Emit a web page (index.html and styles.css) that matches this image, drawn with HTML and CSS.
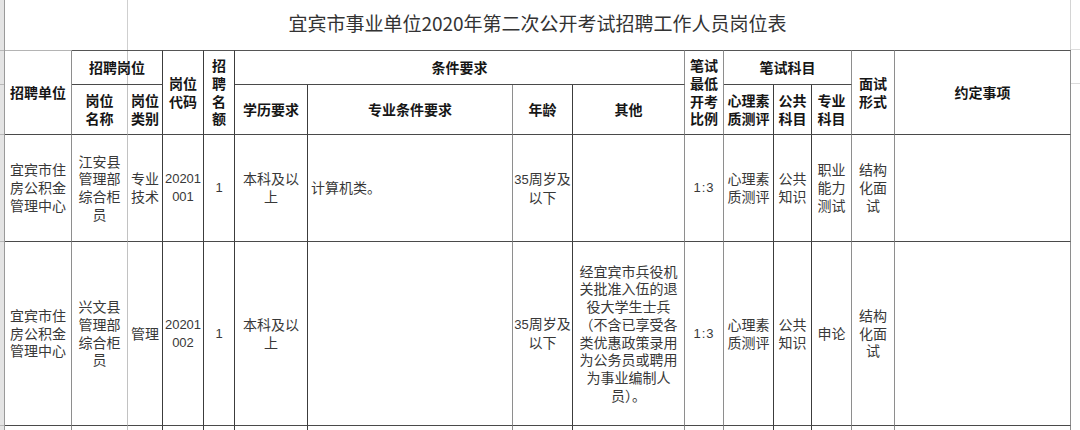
FILE: index.html
```html
<!DOCTYPE html>
<html lang="zh-CN">
<head>
<meta charset="utf-8">
<title>宜宾市事业单位2020年第二次公开考试招聘工作人员岗位表</title>
<link rel="stylesheet" href="styles.css">
</head>
<body>
<div class="sheet">
  <div class="strip">
    <div class="sr r0"></div>
    <div class="sr r1"></div>
    <div class="sr r2"></div>
    <div class="sr r3"></div>
    <div class="sr r4"></div>
  </div>
  <div class="grid">
    <div class="c title">宜宾市事业单位<span class="tnum">2020</span>年第二次公开考试招聘工作人员岗位表</div>

    <div class="c h top top-light rs2 bm">招聘单位</div>
    <div class="c h top cs2 bd gridline">招聘岗位</div>
    <div class="c h top rs2 bd p2">岗位代码</div>
    <div class="c h top rs2 bd p3">招聘名额</div>
    <div class="c h top cs4 bm">条件要求</div>
    <div class="c h top rs2 bm p3">笔试最低开考比例</div>
    <div class="c h top cs3 bm">笔试科目</div>
    <div class="c h top rs2 bm">面试形式</div>
    <div class="c h top rs2 bm">约定事项</div>

    <div class="c h bl p8">岗位名称</div>
    <div class="c h bd p2">岗位类别</div>
    <div class="c h bd p6">学历要求</div>
    <div class="c h bm">专业条件要求</div>
    <div class="c h bd p1">年龄</div>
    <div class="c h bm p5">其他</div>
    <div class="c h bd p3">心理素质测评</div>
    <div class="c h bd p3">公共科目</div>
    <div class="c h bm">专业科目</div>

    <div class="c bm">宜宾市住房公积金管理中心</div>
    <div class="c bl">江安县管理部综合柜员</div>
    <div class="c bd p2">专业技术</div>
    <div class="c bd p1 brk"><span class="num">20201001</span></div>
    <div class="c bd p3"><span class="num">1</span></div>
    <div class="c bd p6">本科及以上</div>
    <div class="c bm left">计算机类。</div>
    <div class="c bd p1"><span><span class="num">35</span>周岁及以下</span></div>
    <div class="c bm p5"></div>
    <div class="c bm p3"><span class="num ratio">1:3</span></div>
    <div class="c bd p3">心理素质测评</div>
    <div class="c bd p3">公共知识</div>
    <div class="c bm">职业能力测试</div>
    <div class="c bm">结构化面试</div>
    <div class="c bm"></div>

    <div class="c bm">宜宾市住房公积金管理中心</div>
    <div class="c bl">兴文县管理部综合柜员</div>
    <div class="c bd p2">管理</div>
    <div class="c bd p1 brk"><span class="num">20201002</span></div>
    <div class="c bd p3"><span class="num">1</span></div>
    <div class="c bd p6">本科及以上</div>
    <div class="c bm left"></div>
    <div class="c bd p1"><span><span class="num">35</span>周岁及以下</span></div>
    <div class="c bm p5">经宜宾市兵役机关批准入伍的退役大学生士兵（不含已享受各类优惠政策录用为公务员或聘用为事业编制人员）。</div>
    <div class="c bm p3"><span class="num ratio">1:3</span></div>
    <div class="c bd p3">心理素质测评</div>
    <div class="c bd p3">公共知识</div>
    <div class="c bm">申论</div>
    <div class="c bm">结构化面试</div>
    <div class="c bm"></div>

    <div class="c nb bm"></div>
    <div class="c nb bl"></div>
    <div class="c nb bd"></div>
    <div class="c nb bd"></div>
    <div class="c nb bd"></div>
    <div class="c nb bd"></div>
    <div class="c nb bm"></div>
    <div class="c nb bd"></div>
    <div class="c nb bm"></div>
    <div class="c nb bm"></div>
    <div class="c nb bd"></div>
    <div class="c nb bd"></div>
    <div class="c nb bm"></div>
    <div class="c nb bm"></div>
    <div class="c nb bm"></div>
  </div>
  <div class="filler"></div>
</div>
</body>
</html>
```

FILE: styles.css
```css
* {
  box-sizing: border-box;
}

html,
body {
  margin: 0;
  padding: 0;
  background: #ffffff;
}

body {
  width: 1080px;
  height: 430px;
  overflow: hidden;
  font-family: "Noto Sans CJK SC", "Noto Sans CJK JP", sans-serif;
  font-size: 14px;
  line-height: 17.7px;
  color: #383838;
}

.sheet {
  display: flex;
  height: 430px;
  overflow: hidden;
  align-items: flex-start;
}

.strip {
  width: 4px;
  height: 430px;
  flex: none;
  background: #e4e4e4;
  display: flex;
  flex-direction: column;
}

.sr {
  border-bottom: 1px solid #b8b8b8;
}

.r0 { height: 51px; }
.r1 { height: 34px; }
.r2 { height: 50px; }
.r3 { height: 107px; }
.r4 { height: 184px; }

.grid {
  flex: none;
  width: 1067px;
  display: grid;
  grid-template-columns: 67px 56px 35px 41px 31px 73px 205px 60px 112px 39px 50px 38px 40px 43px 176px;
  grid-template-rows: 50px 35px 50px 107px 184px 4px;
  border-left: 1px solid #9a9a9a;
}

.filler {
  flex: 1;
  height: 430px;
  background: linear-gradient(to bottom,
    #ffffff 0, #ffffff 49px,
    #dcdcdc 49px, #dcdcdc 50px,
    #ffffff 50px, #ffffff 83px,
    #dcdcdc 83px, #dcdcdc 84px,
    #ffffff 84px);
}

.c {
  display: flex;
  align-items: center;
  justify-content: center;
  text-align: center;
  padding: 0 4px;
  border-right: 1px solid #3c3c3c;
  border-bottom: 1px solid #4a4a4a;
  min-width: 0;
}

.title {
  grid-column: 1 / -1;
  border-bottom: none;
  border-right: 1px solid #d4d4d4;
  font-size: 19px;
  color: #333333;
  padding-bottom: 5px;
  background: linear-gradient(to right,
    transparent 122px, #cfcfcf 122px, #cfcfcf 123px, transparent 123px);
}

.tnum {
  font-size: 19px;
}

.h {
  font-weight: 700;
  color: #161616;
}

.top {
  border-top: 1px solid #555555;
}

.top-light {
  border-top-color: #b4b4b4;
}

.rs2 {
  grid-row: span 2;
}

.cs2 {
  grid-column: span 2;
}

.cs3 {
  grid-column: span 3;
}

.cs4 {
  grid-column: span 4;
}

.gridline {
  background: linear-gradient(to right,
    transparent 55px, #c4c4c4 55px, #c4c4c4 56px, transparent 56px);
}

/* right-edge colours */
.bl { border-right-color: #c2c2c2; }
.bm { border-right-color: #8e8e8e; }
.bd { border-right-color: #3c3c3c; }

.p1 { padding: 0 1px; }
.p2 { padding: 0 2px; }
.p3 { padding: 0 3px; }
.p5 { padding: 0 5px; }
.p6 { padding: 0 6px; }
.p8 { padding: 0 8px; }

.brk {
  word-break: break-all;
}

.num {
  font-family: "Liberation Sans", Arial, sans-serif;
  font-size: 13px;
}

.ratio {
  letter-spacing: 1px;
}

.left {
  justify-content: flex-start;
  text-align: left;
  padding: 0 3px;
}

.nb {
  border-bottom: none;
}
```
